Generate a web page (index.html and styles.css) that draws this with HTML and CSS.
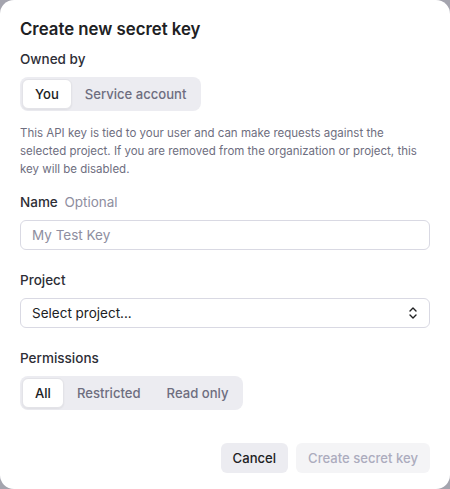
FILE: index.html
```html
<!DOCTYPE html>
<html lang="en">
<head>
    <meta charset="UTF-8">
    <meta name="viewport" content="width=device-width, initial-scale=1.0">
    <title>Create new secret key</title>
    <link rel="stylesheet" href="styles.css">
</head>
<body>
    <div class="modal">
        <h2 class="modal-title">Create new secret key</h2>

        <div class="label owned">Owned by</div>
        <div class="segmented">
            <button class="segment active">You</button>
            <button class="segment">Service account</button>
        </div>

        <p class="hint">This API key is tied to your user and can make requests against the selected project. If you are removed from the organization or project, this key will be disabled.</p>

        <div class="label">Name <span class="optional">Optional</span></div>
        <input class="text-input" type="text" placeholder="My Test Key">

        <div class="label spaced">Project</div>
        <div class="select">
            <span>Select project...</span>
            <svg class="chevrons" width="10" height="14" viewBox="0 0 10 14" fill="none" stroke="#202123" stroke-width="1.4" stroke-linecap="round" stroke-linejoin="round">
                <polyline points="2,5 5,2 8,5"/>
                <polyline points="2,9 5,12 8,9"/>
            </svg>
        </div>

        <div class="label spaced">Permissions</div>
        <div class="segmented">
            <button class="segment active">All</button>
            <button class="segment">Restricted</button>
            <button class="segment">Read only</button>
        </div>

        <div class="actions">
            <button class="btn btn-cancel">Cancel</button>
            <button class="btn btn-create" disabled>Create secret key</button>
        </div>
    </div>
</body>
</html>
```

FILE: styles.css
```css
body {
    margin: 0;
    background-color: #a4a4ae;
    font-family: Inter, 'Noto Sans', Arial, sans-serif;
    color: #202123;
}

.modal {
    background-color: #fff;
    border-radius: 14px;
    height: 489px;
    box-sizing: border-box;
    padding: 18px 20px 16px;
    display: flex;
    flex-direction: column;
}

.modal-title {
    margin: 0;
    font-size: 16.8px;
    line-height: 22px;
    font-weight: 600;
    color: #202123;
}

.label {
    font-size: 13.5px;
    line-height: 20px;
    font-weight: 500;
    color: #2d2e36;
    margin-top: 14px;
}

.label.owned {
    margin-top: 9px;
}

.label.spaced {
    margin-top: 20px;
}

.optional {
    font-weight: 400;
    color: #8e8ea0;
    margin-left: 3px;
}

.segmented {
    display: flex;
    align-self: flex-start;
    margin-top: 8px;
    padding: 2px;
    background-color: #ececf1;
    border-radius: 8px;
}

.segment {
    font-family: inherit;
    font-size: 13.1px;
    font-weight: 500;
    height: 30px;
    padding: 0 12px;
    border: 1px solid transparent;
    border-radius: 6px;
    background: none;
    color: #6e6e80;
}

.segment.active {
    background-color: #fff;
    color: #202123;
    border-color: #e3e3e8;
    box-shadow: 0 1px 2px rgba(0,0,0,0.06);
}

.hint {
    margin: 13px 0 0;
    max-width: 400px;
    font-size: 11.5px;
    line-height: 18px;
    color: #6e6e80;
}

.text-input,
.select {
    margin-top: 8px;
    height: 30px;
    box-sizing: border-box;
    border: 1px solid #d9d9e3;
    border-radius: 6px;
    padding: 0 11px;
    font-family: inherit;
    font-size: 13.5px;
    color: #202123;
}

.text-input::placeholder {
    color: #8e8ea0;
}

.select {
    display: flex;
    align-items: center;
    justify-content: space-between;
}

.actions {
    display: flex;
    justify-content: flex-end;
    gap: 8px;
    margin-top: auto;
}

.btn {
    font-family: inherit;
    font-size: 13.1px;
    font-weight: 500;
    height: 30px;
    padding: 0 12px;
    border: none;
    border-radius: 6px;
}

.btn-cancel {
    background-color: #ececf1;
    color: #202123;
}

.btn-create {
    background-color: #f4f4f6;
    color: #acacbe;
}
```
